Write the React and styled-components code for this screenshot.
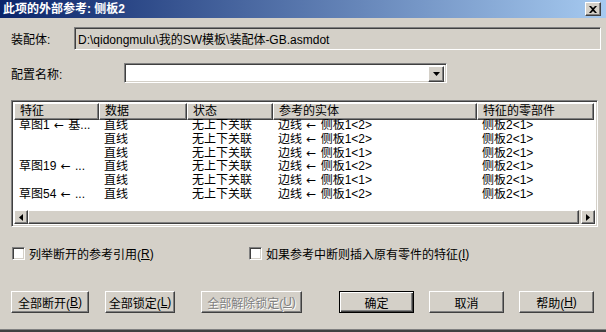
import React from "react";
import styled, { createGlobalStyle, css } from "styled-components";

const Global = createGlobalStyle`
  html, body { margin: 0; padding: 0; background: #d4d0c8; }
  body { font-family: Tahoma, "Liberation Sans", "Noto Sans CJK SC", sans-serif; font-size: 12px; color: #000; }
  * { box-sizing: border-box; }
`;

const CJK = `"Liberation Sans", "Noto Sans CJK SC", sans-serif`;

const sunken = css`
  border: 1px solid;
  border-color: #808080 #ffffff #ffffff #808080;
  box-shadow: inset 1px 1px 0 #404040, inset -1px -1px 0 #d4d0c8;
`;
const raised = css`
  border: 1px solid;
  border-color: #ffffff #404040 #404040 #ffffff;
  box-shadow: inset -1px -1px 0 #808080, inset 1px 1px 0 #d4d0c8;
`;

const Window = styled.div`
  width: 606px;
  height: 332px;
  overflow: hidden;
  background: #d4d0c8;
  display: flex;
  flex-direction: column;
  font-family: ${CJK};
  font-size: 12px;
`;

const TitleBar = styled.div`
  height: 18px;
  flex: none;
  background: linear-gradient(to right, #0a246a, #a6caf0);
  display: flex;
  align-items: center;
  justify-content: space-between;
  padding: 0 5px 0 3px;
`;

const Title = styled.div`
  color: #fff;
  font-weight: bold;
  font-size: 12px;
  line-height: 18px;
`;

const CloseBtn = styled.div`
  width: 16px;
  height: 14px;
  background: #d4d0c8;
  ${raised};
  display: flex;
  align-items: center;
  justify-content: center;
`;

const Body = styled.div`
  flex: 1;
  display: flex;
  flex-direction: column;
  padding: 9px 5px 0 11px;
  border-bottom: 2px solid #404040;
  box-shadow: inset 0 -1px 0 #808080;
`;

const FieldRow = styled.div`
  display: flex;
  align-items: center;
  margin-top: ${(p) => p.$mt || 0}px;
`;

const Label = styled.div`
  width: ${(p) => p.$w}px;
  flex: none;
  white-space: nowrap;
`;

const ReadOnlyField = styled.div`
  flex: 1;
  height: 23px;
  ${sunken};
  background: #d4d0c8;
  padding-left: 3px;
  display: flex;
  align-items: center;
  font-size: 12px;
  white-space: nowrap;
`;

const Combo = styled.div`
  width: 323px;
  height: 20px;
  ${sunken};
  background: #fff;
  display: flex;
  justify-content: flex-end;
  padding: 2px;
`;

const ComboBtn = styled.div`
  width: 16px;
  height: 16px;
  background: #d4d0c8;
  ${raised};
  display: flex;
  align-items: center;
  justify-content: center;
`;

const ListBox = styled.div`
  margin-top: 17px;
  margin-right: 3px;
  height: 127px;
  ${sunken};
  background: #fff;
  padding: 2px;
  display: flex;
  flex-direction: column;
`;

const Header = styled.div`
  display: flex;
  height: 17px;
  flex: none;
`;

const HeadCell = styled.div`
  width: ${(p) => p.$w}px;
  flex: none;
  height: 17px;
  background: #d4d0c8;
  ${raised};
  padding-left: 5px;
  line-height: 15px;
  white-space: nowrap;
  overflow: hidden;
`;

const Rows = styled.div`
  flex: 1;
  display: flex;
  flex-direction: column;
  margin-top: -1px;
`;

const Row = styled.div`
  display: flex;
  height: 13.8px;
  line-height: 13px;
`;

const Cell = styled.div`
  width: ${(p) => p.$w}px;
  flex: none;
  padding-left: 5px;
  white-space: pre;
  overflow: hidden;
`;

const Arrow = styled.span`
  font-family: "DejaVu Sans", sans-serif;
  font-size: 12px;
  display: inline-block;
  width: 12px;
  text-align: center;
`;

const HScroll = styled.div`
  height: 14px;
  flex: none;
  display: flex;
  background: #d4d0c8;
`;

const ScrollBtn = styled.div`
  width: 14px;
  height: 14px;
  background: #d4d0c8;
  ${raised};
  display: flex;
  align-items: center;
  justify-content: center;
`;

const Thumb = styled.div`
  flex: 1;
  height: 14px;
  background: #d4d0c8;
  ${raised};
  margin-right: 2px;
`;

const CheckRow = styled.div`
  margin-top: 20px;
  display: flex;
  align-items: center;
  height: 13px;
  padding-left: 1px;
`;

const CheckItem = styled.label`
  display: flex;
  align-items: center;
  width: ${(p) => p.$w}px;
  flex: none;
  white-space: nowrap;
`;

const CheckBox = styled.span`
  width: 13px;
  height: 13px;
  flex: none;
  ${sunken};
  background: #fff;
  margin-right: 4px;
`;

const U = styled.span`
  text-decoration: underline;
`;

const ButtonRow = styled.div`
  margin-top: 31px;
  display: flex;
  align-items: center;
`;

const Button = styled.div`
  width: ${(p) => p.$w}px;
  margin-left: ${(p) => p.$ml || 0}px;
  height: 22px;
  flex: none;
  background: #d4d0c8;
  ${raised};
  display: flex;
  align-items: center;
  justify-content: center;
  white-space: nowrap;
  color: ${(p) => (p.$disabled ? "#808080" : "#000")};
  text-shadow: ${(p) => (p.$disabled ? "1px 1px 0 #fff" : "none")};
  ${(p) =>
    p.$default &&
    css`
      border: 1px solid #000;
      box-shadow: inset 1px 1px 0 #fff, inset -1px -1px 0 #404040, inset -2px -2px 0 #808080;
    `}
`;

const cols = [85, 88, 86, 204, 117];

const rows = [
  [["草图1 ", " 基..."], "直线", "无上下关联", ["边线 ", " 侧板1<2>"], "侧板2<1>"],
  ["", "直线", "无上下关联", ["边线 ", " 侧板1<2>"], "侧板2<1>"],
  ["", "直线", "无上下关联", ["边线 ", " 侧板1<1>"], "侧板2<1>"],
  [["草图19 ", " ..."], "直线", "无上下关联", ["边线 ", " 侧板1<2>"], "侧板2<1>"],
  ["", "直线", "无上下关联", ["边线 ", " 侧板1<1>"], "侧板2<1>"],
  [["草图54 ", " ..."], "直线", "无上下关联", ["边线 ", " 侧板1<2>"], "侧板2<1>"],
];

const headers = ["特征", "数据", "状态", "参考的实体", "特征的零部件"];

function renderCell(c) {
  if (Array.isArray(c)) {
    return (
      <>
        {c[0]}
        <Arrow>←</Arrow>
        {c[1]}
      </>
    );
  }
  return c;
}

export default function App() {
  return (
    <>
      <Global />
      <Window>
        <TitleBar>
          <Title>此项的外部参考: 侧板2</Title>
          <CloseBtn>
            <svg width="8" height="7" viewBox="0 0 8 7">
              <path d="M0 0 L2 0 L4 2 L6 0 L8 0 L5 3.5 L8 7 L6 7 L4 5 L2 7 L0 7 L3 3.5 Z" fill="#000" />
            </svg>
          </CloseBtn>
        </TitleBar>
        <Body>
          <FieldRow>
            <Label $w={63}>装配体:</Label>
            <ReadOnlyField>D:\qidongmulu\我的SW模板\装配体-GB.asmdot</ReadOnlyField>
          </FieldRow>
          <FieldRow $mt={13}>
            <Label $w={113}>配置名称:</Label>
            <Combo>
              <ComboBtn>
                <svg width="7" height="4" viewBox="0 0 7 4">
                  <path d="M0 0 H7 L3.5 4 Z" fill="#000" />
                </svg>
              </ComboBtn>
            </Combo>
          </FieldRow>
          <ListBox>
            <Header>
              {headers.map((h, i) => (
                <HeadCell key={h} $w={cols[i]}>{h}</HeadCell>
              ))}
            </Header>
            <Rows>
              {rows.map((r, ri) => (
                <Row key={ri}>
                  {r.map((c, ci) => (
                    <Cell key={ci} $w={cols[ci]}>{renderCell(c)}</Cell>
                  ))}
                </Row>
              ))}
            </Rows>
            <HScroll>
              <ScrollBtn>
                <svg width="4" height="7" viewBox="0 0 4 7">
                  <path d="M4 0 V7 L0 3.5 Z" fill="#000" />
                </svg>
              </ScrollBtn>
              <Thumb />
              <ScrollBtn>
                <svg width="4" height="7" viewBox="0 0 4 7">
                  <path d="M0 0 V7 L4 3.5 Z" fill="#000" />
                </svg>
              </ScrollBtn>
            </HScroll>
          </ListBox>
          <CheckRow>
            <CheckItem $w={237}>
              <CheckBox />
              列举断开的参考引用(<U>R</U>)
            </CheckItem>
            <CheckItem $w={300}>
              <CheckBox />
              如果参考中断则插入原有零件的特征(<U>I</U>)
            </CheckItem>
          </CheckRow>
          <ButtonRow>
            <Button $w={78}>全部断开(<U>B</U>)</Button>
            <Button $w={70} $ml={16}>全部锁定(<U>L</U>)</Button>
            <Button $w={101} $ml={26} $disabled>全部解除锁定(<U>U</U>)</Button>
            <Button $w={75} $ml={37} $default>确定</Button>
            <Button $w={75} $ml={15}>取消</Button>
            <Button $w={75} $ml={15}>帮助(<U>H</U>)</Button>
          </ButtonRow>
        </Body>
      </Window>
    </>
  );
}
